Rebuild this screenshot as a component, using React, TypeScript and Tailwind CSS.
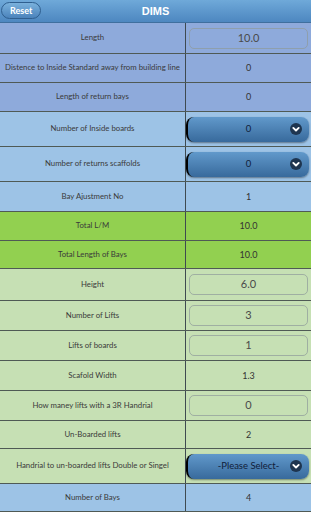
import React from "react";

type Row = {
  label: string;
  value: string;
  kind: "text" | "input" | "select";
  bg: string;
  h: string;
};

const rows: Row[] = [
  { label: "Length", value: "10.0", kind: "input", bg: "bg-[#8eaadb]", h: "h-[31px]" },
  { label: "Distence to Inside Standard away from building line", value: "0", kind: "text", bg: "bg-[#8eaadb]", h: "h-[29px]" },
  { label: "Length of return bays", value: "0", kind: "text", bg: "bg-[#8eaadb]", h: "h-[29px]" },
  { label: "Number of Inside boards", value: "0", kind: "select", bg: "bg-[#9dc3e6]", h: "h-[35px]" },
  { label: "Number of returns scaffolds", value: "0", kind: "select", bg: "bg-[#9dc3e6]", h: "h-[35px]" },
  { label: "Bay Ajustment No", value: "1", kind: "text", bg: "bg-[#9dc3e6]", h: "h-[30px]" },
  { label: "Total L/M", value: "10.0", kind: "text", bg: "bg-[#92d050]", h: "h-[29px]" },
  { label: "Total Length of Bays", value: "10.0", kind: "text", bg: "bg-[#92d050]", h: "h-[28px]" },
  { label: "Height", value: "6.0", kind: "input", bg: "bg-[#c6e0b4]", h: "h-[32px]" },
  { label: "Number of Lifts", value: "3", kind: "input", bg: "bg-[#c6e0b4]", h: "h-[30px]" },
  { label: "Lifts of boards", value: "1", kind: "input", bg: "bg-[#c6e0b4]", h: "h-[30px]" },
  { label: "Scafold Width", value: "1.3", kind: "text", bg: "bg-[#c6e0b4]", h: "h-[30px]" },
  { label: "How maney lifts with a 3R Handrial", value: "0", kind: "input", bg: "bg-[#c6e0b4]", h: "h-[30px]" },
  { label: "Un-Boarded lifts", value: "2", kind: "text", bg: "bg-[#c6e0b4]", h: "h-[28px]" },
  { label: "Handrial to un-boarded lifts Double or Singel", value: "-Please Select-", kind: "select", bg: "bg-[#c6e0b4]", h: "h-[35px]" },
  { label: "Number of Bays", value: "4", kind: "text", bg: "bg-[#9dc3e6]", h: "h-[28px]" },
];

function Chevron() {
  return (
    <svg width="12" height="12" viewBox="0 0 12 12">
      <circle cx="6" cy="6" r="6" fill="#1e3550" />
      <path d="M3.3 4.9 L6 7.5 L8.7 4.9" stroke="#fff" strokeWidth="1.9" fill="none" strokeLinecap="round" strokeLinejoin="round" />
    </svg>
  );
}

function Cell({ row }: { row: Row }) {
  if (row.kind === "input") {
    return (
      <div className="flex-1 flex items-center px-[3px]">
        <div className="w-full h-[21px] rounded-[5px] border border-[#8f9a9a]/70 flex items-center justify-center text-[11px] text-[#4a4a4a]">
          {row.value}
        </div>
      </div>
    );
  }
  if (row.kind === "select") {
    return (
      <div className="flex-1 flex items-center pr-[2px]">
        <div className="relative w-full h-[25px] rounded-[8px] bg-gradient-to-b from-[#6199cb] to-[#386a9c] border-l-2 border-black shadow-[0_1px_2px_rgba(0,0,0,0.4)] flex items-center justify-center text-[9.5px] text-[#10203a]">
          {row.value}
          <span className="absolute right-[7px] top-[6px]">
            <Chevron />
          </span>
        </div>
      </div>
    );
  }
  return (
    <div className="flex-1 flex items-center justify-center text-[9px] text-[#333]">
      {row.value}
    </div>
  );
}

export default function App() {
  return (
    <div className="w-[311px] h-[512px] overflow-hidden bg-white" style={{ fontFamily: "Lato, 'Liberation Sans', sans-serif" }}>
      <div className="relative h-[23px] bg-gradient-to-b from-[#6fa9d9] to-[#4d87c0] border-b border-[#3f6f9e] flex items-center justify-center">
        <button className="absolute left-[1px] top-[2px] h-[17px] px-[8px] rounded-full bg-gradient-to-b from-[#7ab1dc] to-[#4b83bb] border border-[#2f5f8f] text-white text-[9px] font-bold">
          Reset
        </button>
        <span className="text-white text-[11px] font-bold" style={{ fontFamily: "'Liberation Sans', sans-serif" }}>DIMS</span>
      </div>
      {rows.map((row, i) => (
        <div key={i} className={`flex ${row.h} ${row.bg} border-b border-[#4f5a55]`}>
          <div className="w-[186px] shrink-0 border-r border-[#3f4a50] flex items-center justify-center text-center whitespace-nowrap text-[7.8px] text-[#3a3a3a]">
            {row.label}
          </div>
          <Cell row={row} />
        </div>
      ))}
    </div>
  );
}
